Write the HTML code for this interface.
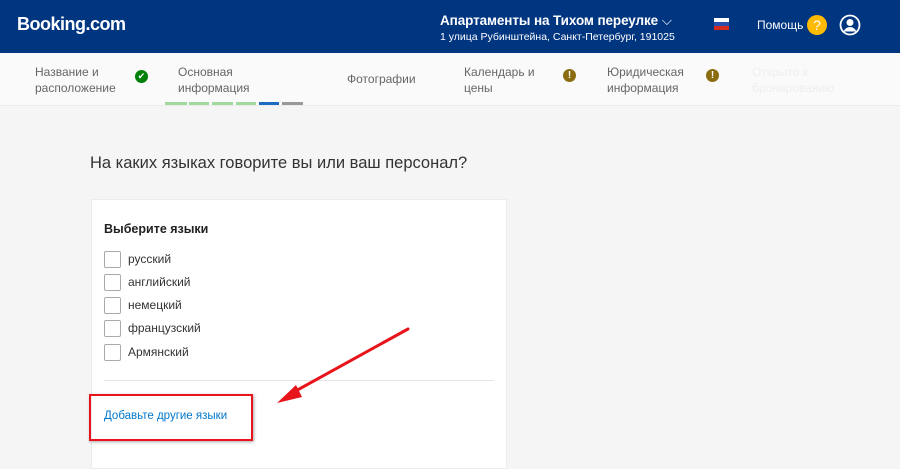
<!DOCTYPE html>
<html><head><meta charset="utf-8"><style>
*{margin:0;padding:0;box-sizing:border-box}
body{width:900px;height:459px;overflow:hidden;background:#f5f5f5;font-family:"Liberation Sans","Noto Sans CJK SC",sans-serif;position:relative}
.hdr{position:absolute;left:0;top:0;width:900px;height:53px;background:#003580;color:#fff}
.abs{position:absolute}
.nav{position:absolute;left:0;top:53px;width:900px;height:53px;background:#fafafa;border-bottom:1px solid #ececec;font-size:12px;color:#666;line-height:22px}
.nav .t{line-height:22px}
.card{position:absolute;left:91px;top:199px;width:416px;height:270px;background:#fff;border:1px solid #ececec}
.cb{position:absolute;left:12px;width:17px;height:17px;border:1px solid #aaa;border-radius:2px;background:#fff}
.lbl{position:absolute;left:36px;font-size:12px;color:#333}
.seg{position:absolute;top:102px;height:3px}
.warn{position:absolute;width:13px;height:13px;border-radius:50%;background:#8a6d10;color:#fff;font-size:10px;font-weight:bold;text-align:center;line-height:13px}
</style></head><body>
<div class="hdr">
<div class="abs" style="left:17px;top:14px;font-size:18px;font-weight:bold;letter-spacing:-0.5px">Booking.com</div>
<div class="abs" style="left:440px;top:13px;font-size:13.5px;font-weight:bold;letter-spacing:-0.1px">Апартаменты на Тихом переулке <span style="font-weight:normal">⌵</span></div>
<div class="abs" style="left:440px;top:31px;font-size:10.5px">1 улица Рубинштейна, Санкт-Петербург, 191025</div>
<div class="abs" style="left:714px;top:18px;width:15px;height:12px;background:linear-gradient(#fff 0 33%,#2a4fb0 33% 66%,#d52b1e 66%)"></div>
<div class="abs" style="left:757px;top:18px;font-size:12px">Помощь</div>
<div class="abs" style="left:807px;top:15px;width:20px;height:20px;border-radius:50%;background:#febb02;color:#fff;text-align:center;font-size:14px;line-height:20px">?</div>
<svg class="abs" style="left:839px;top:14px" width="22" height="22" viewBox="0 0 22 22"><circle cx="11" cy="11" r="9.5" fill="none" stroke="#fff" stroke-width="1.8"/><circle cx="11" cy="8.5" r="3.5" fill="#fff"/><path d="M4.5 17.5c1.5-3 4-4.5 6.5-4.5s5 1.5 6.5 4.5" fill="#fff"/></svg>
</div>
<div class="nav" style="line-height:16px">
<div class="abs" style="left:35px;top:11px">Название и<br>расположение</div>
<div class="abs" style="left:135px;top:17px;width:13px;height:13px;border-radius:50%;background:#008009;color:#fff;font-size:9px;text-align:center;line-height:13px">✔</div>
<div class="abs" style="left:178px;top:11px">Основная<br>информация</div>
<div class="abs" style="left:347px;top:18px">Фотографии</div>
<div class="abs" style="left:464px;top:11px">Календарь и<br>цены</div>
<div class="warn" style="left:563px;top:16px">!</div>
<div class="abs" style="left:607px;top:11px">Юридическая<br>информация</div>
<div class="warn" style="left:706px;top:16px">!</div>
<div class="abs" style="left:752px;top:11px;color:#eee">Открыто к<br>бронированию</div>
</div>
<div class="seg" style="left:165px;width:22px;background:#9fd99b"></div>
<div class="seg" style="left:189px;width:20px;background:#9fd99b"></div>
<div class="seg" style="left:212px;width:21px;background:#9fd99b"></div>
<div class="seg" style="left:236px;width:20px;background:#9fd99b"></div>
<div class="seg" style="left:259px;width:20px;background:#1f6bbf"></div>
<div class="seg" style="left:282px;width:21px;background:#999"></div>
<div class="abs" style="left:90px;top:154px;font-size:16.5px;color:#333">На каких языках говорите вы или ваш персонал?</div>
<div class="card">
<div class="abs" style="left:12px;top:22px;font-size:12.5px;font-weight:bold;color:#222">Выберите языки</div>
<div class="cb" style="top:51px"></div><div class="lbl" style="top:52px">русский</div>
<div class="cb" style="top:74px"></div><div class="lbl" style="top:75px">английский</div>
<div class="cb" style="top:97px"></div><div class="lbl" style="top:98px">немецкий</div>
<div class="cb" style="top:120px"></div><div class="lbl" style="top:121px">французский</div>
<div class="cb" style="top:144px"></div><div class="lbl" style="top:145px">Армянский</div>
<div class="abs" style="left:12px;top:180px;width:390px;height:1px;background:#e6e6e6"></div>
<div class="abs" style="left:12px;top:210px;font-size:11.5px;color:#0077cc">Добавьте другие языки</div>
</div>
<div class="abs" style="left:89px;top:394px;width:164px;height:47px;border:2px solid #e8141b;box-shadow:1px 1px 3px rgba(0,0,0,.35)"></div>
<svg class="abs" style="left:0;top:0" width="900" height="459"><path d="M408 329 L292 393" stroke="#e8141b" stroke-width="3" stroke-linecap="round"/><path d="M277 403 L296 385 L302 397 Z" fill="#e8141b"/></svg>
</body></html>
